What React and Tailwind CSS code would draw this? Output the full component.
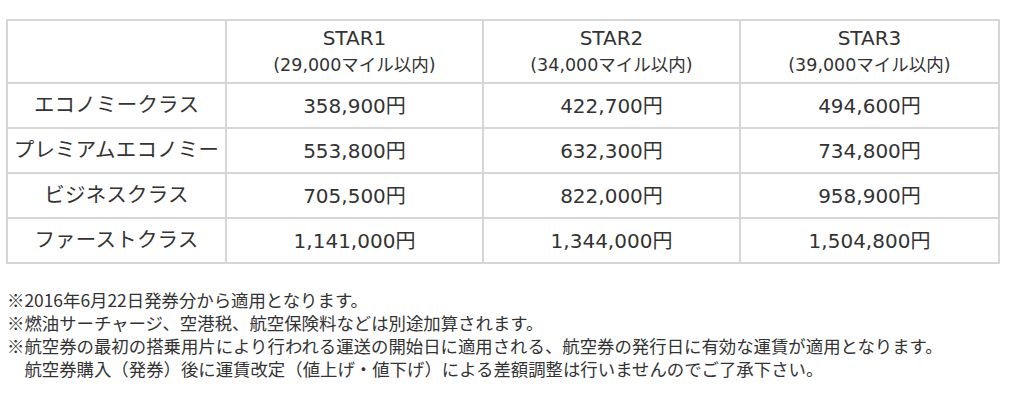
import React from 'react';

const cols = [
    { name: 'STAR1', miles: '(29,000マイル以内)' },
    { name: 'STAR2', miles: '(34,000マイル以内)' },
    { name: 'STAR3', miles: '(39,000マイル以内)' },
];

const rows = [
    { label: 'エコノミークラス', prices: ['358,900円', '422,700円', '494,600円'] },
    { label: 'プレミアムエコノミー', prices: ['553,800円', '632,300円', '734,800円'] },
    { label: 'ビジネスクラス', prices: ['705,500円', '822,000円', '958,900円'] },
    { label: 'ファーストクラス', prices: ['1,141,000円', '1,344,000円', '1,504,800円'] },
];

function App() {
    return (
        <div className="w-[1011px] h-[405px] bg-white pt-[19px] pl-[6px] text-[#333] font-['DejaVu_Sans','Noto_Sans_CJK_JP',sans-serif]">
            {/* fare table */}
            <table className="w-[992px] table-fixed border-collapse border-2 border-[#d6d6d6] text-center">
                <colgroup>
                    <col className="w-[219px]" />
                    <col className="w-[257px]" />
                    <col className="w-[257px]" />
                    <col className="w-[259px]" />
                </colgroup>
                <thead>
                    <tr className="h-[63px]">
                        <th className="border-2 border-[#d6d6d6]"></th>
                        {cols.map((c) => (
                            <th key={c.name} className="border-2 border-[#d6d6d6] font-normal leading-[27px]">
                                <div className="text-[20px]">{c.name}</div>
                                <div className="text-[17.5px]">{c.miles}</div>
                            </th>
                        ))}
                    </tr>
                </thead>
                <tbody>
                    {rows.map((r) => (
                        <tr key={r.label} className="h-[45px]">
                            <td className="border-2 border-[#d6d6d6] text-[20.5px] whitespace-nowrap tracking-[0.2px]">{r.label}</td>
                            {r.prices.map((p, i) => (
                                <td key={i} className="border-2 border-[#d6d6d6] text-[20px]">{p}</td>
                            ))}
                        </tr>
                    ))}
                </tbody>
            </table>

            {/* notes */}
            <div className="mt-[24px] pl-px text-[17.4px] leading-[23px] font-['Noto_Sans_CJK_JP',sans-serif]">
                <p>※2016年6月22日発券分から適用となります。</p>
                <p>※燃油サーチャージ、空港税、航空保険料などは別途加算されます。</p>
                <p>※航空券の最初の搭乗用片により行われる運送の開始日に適用される、航空券の発行日に有効な運賃が適用となります。</p>
                <p>　航空券購入（発券）後に運賃改定（値上げ・値下げ）による差額調整は行いませんのでご了承下さい。</p>
            </div>
        </div>
    );
}

export default App;
